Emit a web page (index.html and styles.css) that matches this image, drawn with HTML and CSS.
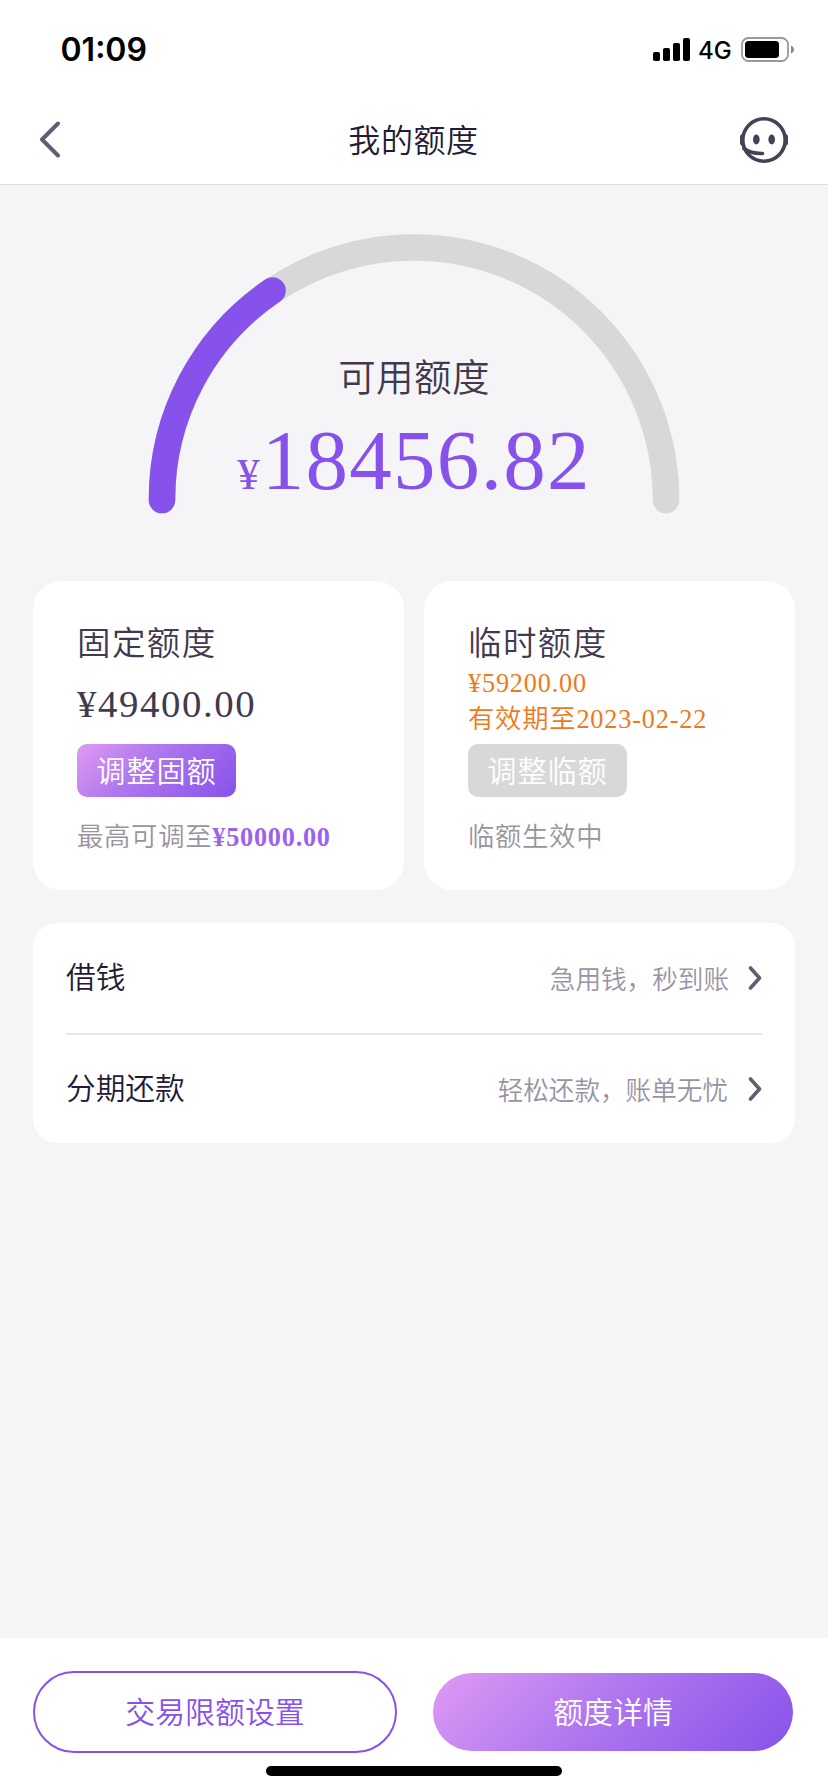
FILE: index.html
```html
<!DOCTYPE html>
<html lang="zh-CN">
<head>
<meta charset="utf-8">
<title>我的额度</title>
<link rel="stylesheet" href="styles.css">
</head>
<body>
<div class="screen">
  <header class="header">
    <div class="status">
      <span class="time">01:09</span>
      <div class="status-icons">
        <svg class="signal" width="37" height="23" viewBox="0 0 37 23"><rect x="0" y="14" width="7" height="9" rx="1.8"/><rect x="10" y="10" width="7" height="13" rx="1.8"/><rect x="20" y="5" width="7" height="18" rx="1.8"/><rect x="30" y="0" width="7" height="23" rx="1.8"/></svg>
        <span class="network">4G</span>
        <svg class="battery" width="54" height="25" viewBox="0 0 54 25"><rect x="1" y="1" width="46" height="23" rx="6.5" fill="none" stroke="#999" stroke-width="1.8"/><rect x="4" y="4" width="34" height="17" rx="3.5"/><path d="M50 8.500c4 1.500 4 6.500 0 8z" fill="#888"/></svg>
      </div>
    </div>
    <nav class="nav">
      <svg class="back" width="22" height="38" viewBox="0 0 22 38"><path d="M19 2.500 3 18.500 19 34.500"/></svg>
      <h1 class="title">我的额度</h1>
      <svg class="service" width="48" height="48" viewBox="0 0 48 48"><circle cx="24" cy="24" r="21.200"/><path class="ear" d="M3.500 18Q0 18 0 20.500v6.500Q0 29.500 3.500 30zM44.500 18Q48 18 48 20.500v6.500Q48 29.500 44.500 30z"/><ellipse class="eye" cx="16.300" cy="23.500" rx="3.300" ry="5"/><ellipse class="eye" cx="31.700" cy="23.500" rx="3.300" ry="5"/><path d="M4 32.500Q11 37.800 22.500 37.500"/></svg>
    </nav>
  </header>

  <main class="content">
    <section class="gauge">
      <svg class="arc" width="532" height="282" viewBox="0 0 532 282"><path class="track" d="M14 266V265.500A252 252 0 0 1 518 265.500V266"/><path class="value" d="M14 266V265.500A252 252 0 0 1 124.500 56.500"/></svg>
      <div class="gauge-text">
        <div class="gauge-label">可用额度</div>
        <div class="gauge-amount"><span class="yen">¥</span>18456.82</div>
      </div>
    </section>

    <section class="cards">
      <article class="card">
        <h2 class="card-title">固定额度</h2>
        <div class="card-amount">¥49400.00</div>
        <button class="adjust">调整固额</button>
        <p class="note">最高可调至<b>¥50000.00</b></p>
      </article>
      <article class="card">
        <h2 class="card-title">临时额度</h2>
        <div class="temp"><div>¥59200.00</div><div>有效期至2023-02-22</div></div>
        <button class="adjust disabled">调整临额</button>
        <p class="note">临额生效中</p>
      </article>
    </section>

    <section class="list">
      <div class="row"><span class="row-name">借钱</span><span class="row-hint">急用钱，秒到账</span><svg class="chevron" width="14" height="24" viewBox="0 0 14 24"><path d="M2.500 2 11.500 12 2.500 22"/></svg></div>
      <div class="row"><span class="row-name">分期还款</span><span class="row-hint second">轻松还款，账单无忧</span><svg class="chevron" width="14" height="24" viewBox="0 0 14 24"><path d="M2.500 2 11.500 12 2.500 22"/></svg></div>
    </section>
  </main>

  <footer class="footer">
    <div class="actions">
      <button class="action outline">交易限额设置</button>
      <button class="action filled">额度详情</button>
    </div>
    <div class="home-bar"></div>
  </footer>
</div>
</body>
</html>
```

FILE: styles.css
```css
* { box-sizing: border-box; margin: 0; padding: 0; }
body { background: #f5f5f7; font-family: "Noto Sans CJK SC", sans-serif; font-weight: 350; color: #40394f; }
button { border: 0; font-family: inherit; font-weight: inherit; }
svg { display: block; flex: none; }
.screen { width: 828px; height: 1792px; display: flex; flex-direction: column; overflow: hidden; }

.header { height: 185px; background: #fff; border-bottom: 1px solid #dedee0; }
.status { height: 98px; display: flex; justify-content: space-between; padding: 0 33px 0 60.500px; font-family: Inter, sans-serif; color: #000; }
.time { font-size: 32px; font-weight: 600; line-height: 100px; }
.status-icons { display: flex; align-items: center; height: 99px; }
.network { font-size: 24px; font-weight: 450; line-height: 30px; margin: 3px 10px 0 8px; width: 33px; white-space: nowrap; }
.nav { height: 84px; display: flex; align-items: center; justify-content: space-between; padding: 0 40px 0 39px; }
.back { margin: 0 26px 0 0; }
.back path { fill: none; stroke: #655c72; stroke-width: 4; stroke-linecap: round; stroke-linejoin: round; }
.title { font-size: 32px; font-weight: 350; letter-spacing: .6px; line-height: 48px; margin-top: -5px; color: #211b36; }
.service circle, .service path { fill: none; stroke: #473f54; stroke-width: 3.600; stroke-linecap: round; }
.service .ear, .service .eye { fill: #473f54; stroke: none; }

.content { flex: 1; padding: 49px 33px 0; }
.gauge { display: grid; justify-items: center; height: 347px; align-items: start; }
.arc, .gauge-text { grid-area: 1 / 1; }
.arc path { fill: none; stroke-width: 26.600; stroke-linecap: round; }
.arc .track { stroke: #d8d8d8; }
.arc .value { stroke: #8752eb; }
.gauge-text { padding-top: 114px; text-align: center; }
.gauge-label { font-size: 37.500px; letter-spacing: .4px; line-height: 54px; }
.gauge-amount { font-family: "Liberation Serif", serif; font-size: 85px; letter-spacing: 1.300px; font-weight: 400; line-height: 110px; color: #8752eb; margin: 3px 0 0; }
.yen { font-size: 45px; letter-spacing: 2px; }

.cards { display: grid; grid-template-columns: 371px 371px; justify-content: space-between; height: 309px; }
.card { background: #fff; border-radius: 28px; padding: 38px 44px 0; }
.card-title { font-size: 33.500px; font-weight: 350; letter-spacing: 1.400px; line-height: 44px; margin-bottom: 2px; }
.card-amount { font-family: "Liberation Serif", serif; font-weight: 400; font-size: 38.800px; letter-spacing: 1.600px; line-height: 77px; height: 79px; }
.temp { font-family: "Liberation Serif", "Noto Sans CJK SC", serif; font-size: 26.300px; letter-spacing: .8px; line-height: 36px; height: 79px; padding-top: 1px; color: #ee7a20; }
.temp div { height: 36px; }
.adjust { display: block; width: 159px; height: 53px; border-radius: 10px; background: linear-gradient(135deg, #df9af3, #b178ef 40%, #8752eb); color: #fff; font-size: 29.200px; letter-spacing: .9px; line-height: 49px; padding-bottom: 3px; }
.disabled { background: #d8d8d8; }
.note { font-family: "Liberation Serif", "Noto Sans CJK SC", serif; font-size: 26.300px; letter-spacing: .75px; line-height: 36px; margin-top: 23px; color: #98949f; white-space: nowrap; }
.note b { font-weight: 700; color: #9b62ee; }

.list { background: #fff; border-radius: 24px; margin-top: 33px; padding: 0 33px; }
.row { height: 108px; display: flex; align-items: center; }
.row:first-child { height: 112px; border-bottom: 2px solid #e9e9ec; }
.row-name { flex: 1; font-size: 29.700px; line-height: 44px; margin-top: -4px; color: #211b36; }
.row-hint { font-size: 25.600px; line-height: 38px; color: #9793a5; margin-right: 19px; }
.second { margin: -1px 20px 0 0; }
.chevron path { fill: none; stroke: #655c72; stroke-width: 3.600; stroke-linecap: round; stroke-linejoin: round; }

.footer { height: 154px; background: #fff; padding: 33px 35px 0 33px; }
.actions { display: flex; justify-content: space-between; align-items: center; height: 82px; }
.action { font-size: 29.900px; border-radius: 41px; padding-bottom: 4px; }
.outline { width: 364px; height: 82px; border: 2px solid #8752eb; background: #fff; color: #8752eb; }
.filled { width: 360px; height: 78px; color: #fff; background: linear-gradient(135deg, #df9af3, #b178ef 45%, #8752eb); }
.home-bar { width: 296px; height: 10px; border-radius: 5px; background: #000; margin: 13px 0 0 233px; }
```
